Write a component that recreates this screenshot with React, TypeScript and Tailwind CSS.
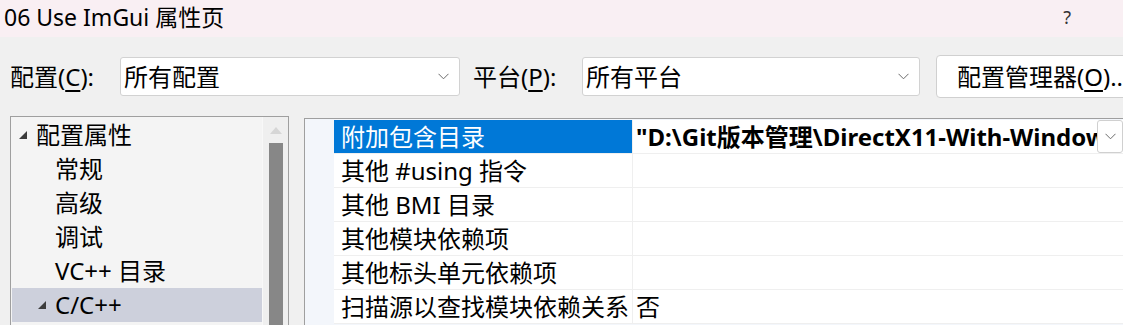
import React from "react";

const font = "font-['Noto_Sans','Noto_Sans_CJK_SC',sans-serif]";

function Chevron() {
  return (
    <svg width="11" height="7" viewBox="0 0 11 7" className="shrink-0">
      <polyline points="0.5,0.8 5.5,5.8 10.5,0.8" fill="none" stroke="#6b6b6b" strokeWidth="1" />
    </svg>
  );
}

function Caret() {
  return (
    <svg width="8" height="8" viewBox="0 0 8 8" className="shrink-0">
      <polygon points="8,0 8,8 0,8" fill="#3c3c3c" />
    </svg>
  );
}

function Combo({ value, width }: { value: string; width: string }) {
  return (
    <div
      className={`${width} h-[39px] shrink-0 flex items-center justify-between rounded-[3px] border border-[#d2d2d2] bg-white pl-[3px] pr-[10px]`}
    >
      <span className="text-[24px] text-black">{value}</span>
      <Chevron />
    </div>
  );
}

const tree = [
  { label: "配置属性", level: 0, caret: true },
  { label: "常规", level: 1 },
  { label: "高级", level: 1 },
  { label: "调试", level: 1 },
  { label: "VC++ 目录", level: 1 },
  { label: "C/C++", level: 1, caret: true, selected: true },
];

const props = [
  { name: "附加包含目录", value: "\"D:\\Git版本管理\\DirectX11-With-Windows-SDK\\Project 06\\ImGui\"", selected: true },
  { name: "其他 #using 指令", value: "" },
  { name: "其他 BMI 目录", value: "" },
  { name: "其他模块依赖项", value: "" },
  { name: "其他标头单元依赖项", value: "" },
  { name: "扫描源以查找模块依赖关系", value: "否" },
];

export default function App() {
  return (
    <div className={`w-[1123px] h-[325px] overflow-hidden bg-[#f0f0f0] text-black ${font}`}>
      {/* title bar */}
      <div className="h-[37px] flex items-center bg-[#f9eff3] pl-[4px] pb-[3px]">
        <span className="text-[23px]">06 Use ImGui 属性页</span>
        <span className="ml-auto mr-[52px] text-[18px] text-[#333]">?</span>
      </div>

      {/* configuration row */}
      <div className="h-[79px] flex items-center pl-[10px] whitespace-nowrap">
        <span className="w-[110px] shrink-0 text-[24px]">
          配置(<span className="underline underline-offset-4">C</span>):
        </span>
        <Combo value="所有配置" width="w-[340px]" />
        <span className="ml-[13px] w-[109px] shrink-0 text-[24px]">
          平台(<span className="underline underline-offset-4">P</span>):
        </span>
        <Combo value="所有平台" width="w-[338px]" />
        <div className="ml-[16px] h-[43px] w-[210px] shrink-0 flex items-center rounded-[4px] border border-[#d0d0d0] bg-white pl-[20px] text-[24px]">
          配置管理器(<span className="underline underline-offset-4">O</span>)...
        </div>
      </div>

      {/* panels */}
      <div className="flex items-start">
        <div className="ml-[10px] w-[279px] h-[240px] shrink-0 flex border border-[#9f9f9f] bg-[#f4f4f4]">
          <div className="flex-1 pt-[1px] pl-[1px]">
            {tree.map((t) => (
              <div
                key={t.label}
                className={`h-[34px] flex items-center whitespace-nowrap text-[24px] ${
                  t.selected ? "bg-[#cdd0dc]" : ""
                } ${t.level === 0 ? "pl-[7px]" : t.caret ? "pl-[26px]" : "pl-[43px]"}`}
              >
                {t.caret && (
                  <span className="mr-[9px] flex">
                    <Caret />
                  </span>
                )}
                {t.label}
              </div>
            ))}
          </div>
          <div className="w-[26px] bg-[#efefef] border-l border-[#f8f8f8] flex flex-col items-center pt-[10px]">
            <svg width="12" height="7" viewBox="0 0 12 7">
              <polygon points="6,0 12,7 0,7" fill="#d6d6d6" />
            </svg>
            <div className="mt-[9px] w-[14px] flex-1 bg-[#878787]" />
          </div>
        </div>

        <div className="ml-[15px] mt-[2px] w-[819px] shrink-0 h-[240px] border-t border-l border-[#9f9f9f] bg-[#f3f6fb] pl-[29px] pt-[1px]">
          {props.map((p) => (
            <div key={p.name} className="h-[34px] flex border-b border-[#efefef] bg-white">
              <div
                className={`w-[299px] shrink-0 flex items-center pl-[7px] text-[24px] whitespace-nowrap border-r border-[#efefef] ${
                  p.selected ? "bg-[#0078d7] text-white" : ""
                }`}
              >
                {p.name}
              </div>
              <div className="flex-1 min-w-0 flex items-center">
                <span
                  className={`pl-[3px] min-w-0 flex-1 text-[24px] whitespace-nowrap overflow-hidden ${
                    p.selected ? "font-bold" : ""
                  }`}
                >
                  {p.value}
                </span>
                {p.selected && (
                  <div className="h-[33px] w-[26px] shrink-0 flex items-center justify-center rounded-[3px] border border-[#d0d0d0] bg-white">
                    <Chevron />
                  </div>
                )}
              </div>
            </div>
          ))}
        </div>
      </div>
    </div>
  );
}
